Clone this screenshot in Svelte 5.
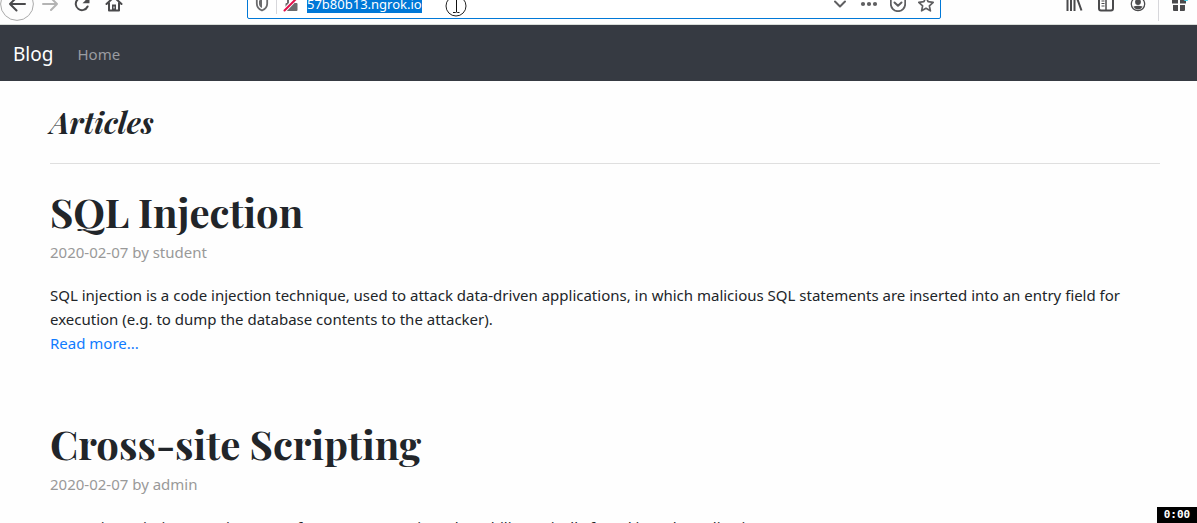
<script>
  import { onMount } from 'svelte';

  let address;

  const articles = [
    {
      title: 'SQL Injection',
      meta: '2020-02-07 by student',
      text: 'SQL injection is a code injection technique, used to attack data-driven applications, in which malicious SQL statements are inserted into an entry field for execution (e.g. to dump the database contents to the attacker).'
    },
    {
      title: 'Cross-site Scripting',
      meta: '2020-02-07 by admin',
      text: 'Cross-site scripting (XSS) is a type of computer security vulnerability typically found in web applications.'
    }
  ];

  onMount(() => {
    address.focus();
    address.select();
  });
</script>

<div class="window">
  <header class="browser">
    <div class="toolbar">
      <div class="history">
        <button class="back" aria-label="Back">
          <svg width="34" height="34" viewBox="0 0 34 34"><circle cx="17" cy="17" r="16.4" fill="#fdfdfd" stroke="#aaa" /><path d="M25 17H10M16.5 10.5L10 17l6.5 6.5" fill="none" stroke="#4a4a4c" stroke-width="2" stroke-linecap="round" stroke-linejoin="round" /></svg>
        </button>
        <button aria-label="Forward">
          <svg width="20" height="20" viewBox="0 0 20 20"><path d="M3 10h14M11 4l6 6-6 6" fill="none" stroke="#b4b4b4" stroke-width="2" stroke-linecap="round" stroke-linejoin="round" /></svg>
        </button>
        <button aria-label="Reload">
          <svg width="20" height="20" viewBox="0 0 20 20"><path d="M15.6 12.5A6.2 6.2 0 1 1 15 6.300" fill="none" stroke="#4a4a4c" stroke-width="2" stroke-linecap="round" /><path d="M17.500 2.500v6.800h-7z" fill="#4a4a4c" /></svg>
        </button>
        <button aria-label="Home page">
          <svg width="20" height="20" viewBox="0 0 20 20"><path d="M2.500 10L10 3l7.500 7M5 9v7.500h10V9" fill="none" stroke="#4a4a4c" stroke-width="2" stroke-linecap="round" stroke-linejoin="round" /><path d="M8 17v-6.500h4V17z" fill="#4a4a4c" /><path d="M10 12.500v2" stroke="#fdfdfd" /></svg>
        </button>
      </div>

      <div class="urlbar">
        <svg width="16" height="16" viewBox="0 0 16 16"><path d="M8 1l5.200 1.600v4.900c0 3.300-2 5.700-5.200 7-3.200-1.300-5.200-3.700-5.200-7V2.600z" fill="none" stroke="#6b6b6d" stroke-width="1.800" /><path d="M8 3.500v8.600c-2-1-3-2.500-3-4.600V4.400z" fill="#6b6b6d" /></svg>
        <span class="divider"></span>
        <svg width="16" height="16" viewBox="0 0 16 16"><path d="M5 8V4.500a3 3 0 0 1 6 0V8" fill="none" stroke="#6b6b6d" stroke-width="2" /><rect x="2.500" y="7" width="12" height="8" rx="1" fill="#6b6b6d" /><path d="M1.500 14.500L13.500 2" stroke="#fdfdfd" stroke-width="4" /><path d="M1.500 14.500L14 2" stroke="#e2114b" stroke-width="2" stroke-linecap="round" /></svg>
        <input bind:this={address} aria-label="Address" value="57b80b13.ngrok.io" spellcheck="false" />
        <div class="actions">
          <button aria-label="Show history"><svg width="16" height="16" viewBox="0 0 16 16"><path d="M3 5.500l5 5 5-5" fill="none" stroke="#5f5f61" stroke-width="2" stroke-linecap="round" stroke-linejoin="round" /></svg></button>
          <button aria-label="Page actions"><svg width="18" height="16" viewBox="0 0 18 16"><g fill="#5f5f61"><circle cx="3" cy="8" r="2.100" /><circle cx="9" cy="8" r="2.100" /><circle cx="15" cy="8" r="2.100" /></g></svg></button>
          <button aria-label="Save to Pocket"><svg width="16" height="16" viewBox="0 0 16 16"><path d="M1.800 1.500h12.400q1 0 1 1V8a7.200 7.200 0 0 1-14.400 0V2.500q0-1 1-1z" fill="none" stroke="#5f5f61" stroke-width="1.800" /><path d="M4.500 6.500L8 9.800l3.500-3.300" fill="none" stroke="#5f5f61" stroke-width="2" stroke-linecap="round" stroke-linejoin="round" /></svg></button>
          <button aria-label="Bookmark this page"><svg width="16" height="16" viewBox="0 0 16 16"><path d="M8 1l2.100 4.700 5.100.6-3.800 3.500 1 5L8 12.300l-4.400 2.500 1-5L.8 6.300l5.100-.6z" fill="none" stroke="#5f5f61" stroke-width="1.700" stroke-linejoin="round" /></svg></button>
        </div>
      </div>

      <div class="tools">
        <button aria-label="Library"><svg width="18" height="18" viewBox="0 0 18 18"><path d="M2.500 2v14M6 2v14M9.500 2v14M12 3l4.500 12.500" fill="none" stroke="#4a4a4c" stroke-width="2" /></svg></button>
        <button aria-label="Sidebars"><svg width="18" height="18" viewBox="0 0 18 18"><rect x="2" y="2.500" width="14" height="13" rx="2" fill="none" stroke="#4a4a4c" stroke-width="2" /><path d="M9 3v12" stroke="#4a4a4c" stroke-width="1.500" /><path d="M4.500 6h3M4.500 8.500h3M4.500 11h3" stroke="#4a4a4c" /></svg></button>
        <button aria-label="Account"><svg width="18" height="18" viewBox="0 0 18 18"><circle cx="9" cy="9" r="6.700" fill="none" stroke="#4a4a4c" stroke-width="1.300" /><circle cx="9" cy="7" r="2.900" fill="#4a4a4c" /><path d="M4.500 11.500q4.500-1.600 9 0-1.500 3-4.500 3t-4.500-3z" fill="#4a4a4c" /></svg></button>
        <span class="edge"></span>
        <button aria-label="What's new"><svg width="18" height="18" viewBox="0 0 18 18"><path d="M2 4.500h6v4H2zM10 4.500h6v4h-6zM3 10h5v6H4q-1 0-1-1zM10 10h5v5q0 1-1 1h-4z" fill="#4a4a4c" /><circle cx="16" cy="3" r="3" fill="#42d3ee" /></svg></button>
      </div>
    </div>
    <svg class="pointer" width="22" height="22" viewBox="0 0 22 22"><circle cx="11" cy="11" r="10" fill="none" stroke="#222" /><path d="M8 4.500h2.500L11.500 5v12l-1 .5H8M14.500 4.500h-2l-1 .5M14.500 17.500h-2l-1-.5" fill="none" stroke="#111" /></svg>
  </header>

  <nav>
    <a class="brand" href="#blog">Blog</a>
    <a class="link" href="#home">Home</a>
  </nav>

  <main>
    <h1>Articles</h1>
    <hr />
    {#each articles as article}
      <article>
        <h2>{article.title}</h2>
        <p class="meta">{article.meta}</p>
        <p>{article.text}</p>
        <a href="#article">Read more...</a>
      </article>
    {/each}
  </main>

  <time class="timer">0:00</time>
</div>

<style>
  :global(body) {
    margin: 0;
    background: #fefefe;
  }

  .window {
    position: relative;
    height: 100vh;
    overflow: hidden;
    color: #212529;
    font: 15px/24px "Noto Sans", "Open Sans", sans-serif;
  }

  svg {
    display: block;
    flex: none;
  }

  button {
    display: block;
    padding: 0;
    border: 0;
    background: none;
  }

  .browser {
    position: relative;
    display: flex;
    align-items: flex-end;
    height: 24px;
    overflow: hidden;
    border-bottom: 1px solid #d9ddd9;
  }

  .toolbar {
    display: flex;
    flex: 1;
    align-items: center;
    height: 40px;
  }

  .history {
    display: flex;
    align-items: center;
    gap: 12px;
    margin-right: 123px;
  }

  .history .back {
    margin-right: -6px;
  }

  .urlbar {
    display: flex;
    flex: 1;
    align-items: center;
    box-sizing: border-box;
    height: 30px;
    padding: 0 6px;
    border: 1px solid #0078d7;
    border-radius: 2px;
    background: #fff;
  }

  .divider {
    width: 1px;
    height: 20px;
    margin: 0 6px;
    background: #d7d7db;
  }

  input {
    flex: 1;
    min-width: 0;
    height: 20px;
    margin-left: 8px;
    padding: 0;
    border: 0;
    outline: 0;
    background: none;
    font: 13px/18px "Noto Sans", "Open Sans", sans-serif;
  }

  input::selection {
    background: #0078d7;
    color: #fff;
  }

  .actions {
    display: flex;
    gap: 12px;
  }

  .tools {
    display: flex;
    align-items: center;
    gap: 14px;
    margin-left: 124px;
    padding-right: 9px;
  }

  .edge {
    width: 1px;
    height: 34px;
    margin: 0 -3px;
    background: #d7d7db;
  }

  .pointer {
    position: absolute;
    left: 445px;
    top: -5px;
  }

  nav {
    display: flex;
    align-items: center;
    gap: 24px;
    box-sizing: border-box;
    height: 56px;
    padding: 2px 13px 0;
    background: #363a42;
  }

  a {
    color: #107bff;
    text-decoration: none;
  }

  nav .brand {
    color: #fff;
    font-size: 19px;
    line-height: 30px;
  }

  nav .link {
    color: #9a9ca1;
  }

  main {
    padding: 20px 37px 0 50px;
  }

  h1,
  h2,
  p {
    margin: 0;
  }

  h1,
  h2 {
    font-family: "Playfair Display", "Liberation Serif", serif;
    font-weight: 700;
  }

  h1 {
    font-size: 30px;
    font-style: italic;
    line-height: 42px;
  }

  hr {
    margin: 20px 0 24px;
    border: 0;
    border-top: 1px solid #dfdfdf;
  }

  h2 {
    margin-bottom: 4px;
    font-size: 40px;
    line-height: 48px;
  }

  article {
    padding-bottom: 65px;
  }

  .meta {
    margin-bottom: 19px;
    color: #999;
  }

  .timer {
    position: absolute;
    right: 0;
    bottom: 0;
    width: 40px;
    background: #000;
    color: #fff;
    font: bold 11px/16px "DejaVu Sans Mono", monospace;
    text-align: center;
  }
</style>
